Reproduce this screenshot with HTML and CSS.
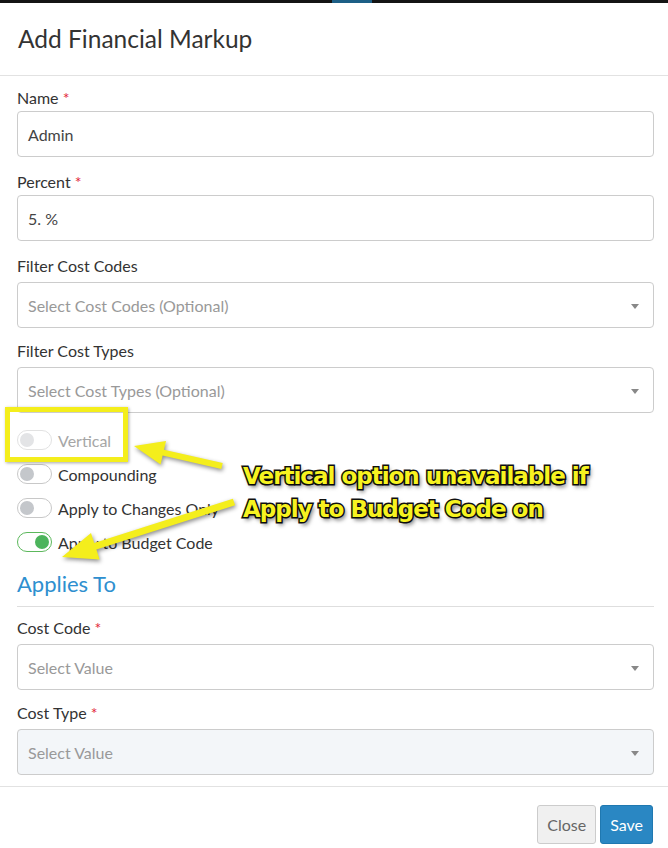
FILE: index.html
```html
<!DOCTYPE html>
<html lang="en">

<head>
    <meta charset="UTF-8">
    <meta name="viewport" content="width=device-width, initial-scale=1.0">
    <title>Add Financial Markup</title>
    <link rel="stylesheet" href="styles.css">
</head>

<body>
    <div class="backdrop-strip"><span class="strip-blue"></span></div>

    <div class="modal">
        <div class="modal-header">
            <h2>Add Financial Markup</h2>
        </div>

        <form class="modal-body">
            <label class="field-label">Name <span class="req">*</span></label>
            <div class="input-box">Admin</div>

            <label class="field-label">Percent <span class="req">*</span></label>
            <div class="input-box">5. %</div>

            <label class="field-label">Filter Cost Codes</label>
            <div class="input-box select placeholder">Select Cost Codes (Optional)<span class="caret"></span></div>

            <label class="field-label">Filter Cost Types</label>
            <div class="input-box select placeholder">Select Cost Types (Optional)<span class="caret"></span></div>

            <div class="toggles">
                <div class="toggle-row disabled"><span class="switch"></span>Vertical</div>
                <div class="toggle-row"><span class="switch"></span>Compounding</div>
                <div class="toggle-row"><span class="switch"></span>Apply to Changes Only</div>
                <div class="toggle-row on"><span class="switch"></span>Apply to Budget Code</div>
            </div>

            <h3 class="section-title">Applies To</h3>

            <label class="field-label">Cost Code <span class="req">*</span></label>
            <div class="input-box select placeholder">Select Value<span class="caret"></span></div>

            <label class="field-label">Cost Type <span class="req">*</span></label>
            <div class="input-box select placeholder locked">Select Value<span class="caret"></span></div>
        </form>

        <div class="modal-footer">
            <button type="button" class="btn btn-close">Close</button>
            <button type="button" class="btn btn-save">Save</button>
        </div>
    </div>

    <!-- annotation layer drawn over the screenshot -->
    <div class="callout-box"></div>
    <svg class="arrows" width="668" height="848" viewBox="0 0 668 848">
        <polygon points="134,446 166,441 164,449.8 222.7,463.1 221.3,468.9 162.6,455.6 160.6,464.4" />
        <polygon points="62,557 91,533 94.2,543 232.9,498.7 235.1,505.3 96.4,549.6 99.6,559.6" />
    </svg>
    <div class="callout-text">Vertical option unavailable if<br>Apply to Budget Code on</div>
</body>

</html>
```

FILE: styles.css
```css
* {
    margin: 0;
    padding: 0;
    box-sizing: border-box;
}

body {
    font-family: Lato, "Open Sans", sans-serif;
    background: #fff;
    width: 668px;
    height: 848px;
    overflow: hidden;
    position: relative;
    color: #333;
}

.backdrop-strip {
    height: 3px;
    background: #141414;
    position: relative;
}

.strip-blue {
    position: absolute;
    left: 332px;
    top: 0;
    width: 40px;
    height: 3px;
    background: #1d5f86;
}

/* Header */
.modal-header {
    height: 73px;
    border-bottom: 1px solid #e2e2e2;
    display: flex;
    align-items: center;
    padding-left: 18px;
}

.modal-header h2 {
    font-weight: 400;
    font-size: 24.5px;
    color: #333;
    margin-top: -2px;
}

/* Body */
.modal-body {
    display: flex;
    flex-direction: column;
    padding: 12px 14px 0 17px;
}

.field-label {
    font-size: 16px;
    line-height: 20px;
    color: #333;
    margin-bottom: 3px;
}

.req {
    color: #e2263a;
}

.input-box {
    height: 46px;
    border: 1px solid #ccc;
    border-radius: 4px;
    padding: 0 10px;
    display: flex;
    align-items: center;
    font-size: 16px;
    color: #444;
    margin-bottom: 15px;
    position: relative;
}

.input-box.select {
    margin-top: 3px;
    margin-bottom: 13px;
}

.placeholder {
    color: #999;
}

.locked {
    background: #f3f6f9;
}

.caret {
    position: absolute;
    right: 14px;
    top: 21px;
    border-left: 4px solid transparent;
    border-right: 4px solid transparent;
    border-top: 5px solid #888;
}

/* Toggles */
.toggles {
    margin-top: -3px;
}

.toggle-row {
    height: 34px;
    display: flex;
    align-items: center;
    gap: 6px;
    font-size: 16px;
    color: #333;
}

.switch {
    width: 35px;
    height: 20px;
    border: 1px solid #c8c8c8;
    border-radius: 10px;
    background: #fff;
    position: relative;
}

.switch::after {
    content: "";
    position: absolute;
    left: 2px;
    top: 2px;
    width: 14px;
    height: 14px;
    border-radius: 50%;
    background: #c4c7cb;
}

.toggle-row.disabled {
    color: #a6a6a6;
}

.toggle-row.disabled .switch {
    border-color: #e2e2e2;
}

.toggle-row.disabled .switch::after {
    background: #e3e4e6;
}

.toggle-row.on .switch {
    border-color: #5cb85c;
}

.toggle-row.on .switch::after {
    left: auto;
    right: 2px;
    background: #4cb45c;
}

.section-title {
    font-weight: 400;
    font-size: 22px;
    line-height: 26px;
    color: #2e8fcf;
    margin-top: 12px;
    padding-bottom: 9px;
    border-bottom: 1px solid #dedede;
    margin-bottom: 11px;
}

/* Footer */
.modal-footer {
    border-top: 1px solid #e2e2e2;
    margin-top: -2px;
    display: flex;
    justify-content: flex-end;
    gap: 4px;
    padding: 18px 15px 0 0;
}

.btn {
    height: 39px;
    font-family: Lato, "Open Sans", sans-serif;
    font-size: 16px;
    border-radius: 3px;
    padding: 0 9px;
    cursor: pointer;
}

.btn-close {
    background: #f0f0f0;
    border: 1px solid #ccc;
    color: #666;
}

.btn-save {
    background: #2a87c3;
    border: 1px solid #1f78b0;
    color: #fff;
}

/* Annotation overlay */
.callout-box {
    position: absolute;
    left: 5px;
    top: 407px;
    width: 123px;
    height: 55px;
    border: 5px solid #f4ee1c;
    box-shadow: 1px 1px 3px rgba(0, 0, 0, 0.35);
}

.arrows {
    position: absolute;
    left: 0;
    top: 0;
    pointer-events: none;
    filter: drop-shadow(1px 2px 2px rgba(0, 0, 0, 0.45));
}

.arrows polygon {
    fill: #f4ee1c;
}

.callout-text {
    position: absolute;
    left: 243px;
    top: 460px;
    font-family: "DejaVu Sans", sans-serif;
    font-weight: 700;
    font-size: 23px;
    line-height: 33px;
    letter-spacing: -1px;
    color: #f7f320;
    -webkit-text-stroke: 3px #111;
    paint-order: stroke fill;
    text-shadow: 2px 3px 4px rgba(0, 0, 0, 0.6);
    white-space: nowrap;
}
```
